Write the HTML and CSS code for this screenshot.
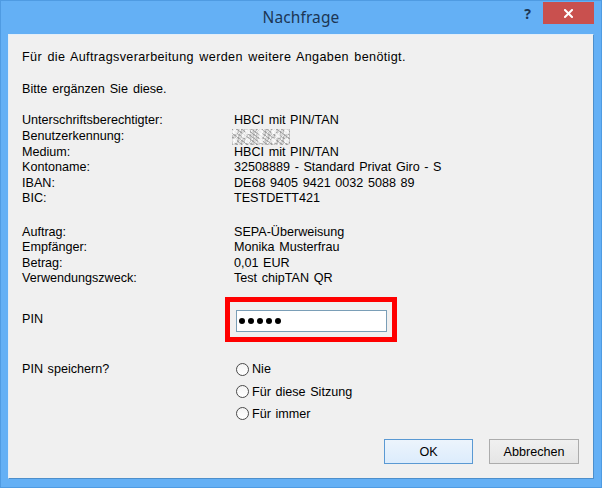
FILE: index.html
```html
<!DOCTYPE html>
<html lang="de">
<head>
<meta charset="utf-8">
<title>Nachfrage</title>
<link rel="stylesheet" href="styles.css">
</head>
<body>
<div class="window">
  <div class="titlebar">
    <div></div>
    <div class="title">Nachfrage</div>
    <div class="controls">
      <span class="help">?</span>
      <span class="close"><svg width="9" height="9" viewBox="0 0 9 9"><path d="M1 1 L8 8 M8 1 L1 8" stroke="#fff" stroke-width="2" stroke-linecap="square"/></svg></span>
    </div>
  </div>
  <div class="client">
    <p class="line first">Für die Auftragsverarbeitung werden weitere Angaben benötigt.</p>
    <p class="line second">Bitte ergänzen Sie diese.</p>
    <div class="info">
      <span>Unterschriftsberechtigter:</span><span>HBCI mit PIN/TAN</span>
      <span>Benutzerkennung:</span><span><span class="blurred"></span></span>
      <span>Medium:</span><span>HBCI mit PIN/TAN</span>
      <span>Kontoname:</span><span>32508889 - Standard Privat Giro - S</span>
      <span>IBAN:</span><span>DE68 9405 9421 0032 5088 89</span>
      <span>BIC:</span><span>TESTDETT421</span>
    </div>
    <div class="info order">
      <span>Auftrag:</span><span>SEPA-Überweisung</span>
      <span>Empfänger:</span><span>Monika Musterfrau</span>
      <span>Betrag:</span><span>0,01 EUR</span>
      <span>Verwendungszweck:</span><span>Test chipTAN QR</span>
    </div>
    <div class="pin-row">
      <span class="pin-label">PIN</span>
      <div class="highlight">
        <div class="pin-input"><span class="dot"></span><span class="dot"></span><span class="dot"></span><span class="dot"></span><span class="dot"></span></div>
      </div>
    </div>
    <div class="save-row">
      <span class="save-label">PIN speichern?</span>
      <div class="radios">
        <label class="radio"><span class="circle"></span>Nie</label>
        <label class="radio"><span class="circle"></span>Für diese Sitzung</label>
        <label class="radio"><span class="circle"></span>Für immer</label>
      </div>
    </div>
    <div class="buttons">
      <button class="btn default">OK</button>
      <button class="btn">Abbrechen</button>
    </div>
  </div>
</div>
</body>
</html>
```

FILE: styles.css
```css
* { box-sizing: border-box; }
html, body { margin: 0; padding: 0; }
body {
  width: 602px;
  height: 488px;
  overflow: hidden;
  font-family: "Liberation Sans", Arial, sans-serif;
  font-size: 12.6px;
  word-spacing: 1.1px;
  color: #000;
}
.window {
  width: 602px;
  height: 488px;
  background: #64b0f5;
  border: 1px solid #4f9be2;
  display: flex;
  flex-direction: column;
}
.titlebar {
  height: 33px;
  display: grid;
  grid-template-columns: 1fr auto 1fr;
  align-items: start;
}
.title {
  font-family: "Noto Sans", "Open Sans", sans-serif;
  font-size: 15.5px;
  word-spacing: 0;
  color: #1c3654;
  line-height: 33px;
  letter-spacing: 0.1px;
}
.controls {
  justify-self: end;
  display: flex;
  align-items: flex-start;
  padding-right: 7px;
}
.help {
  font-family: "Noto Sans", sans-serif;
  font-weight: bold;
  font-size: 14px;
  color: #1c3654;
  line-height: 14px;
  margin-top: 6px;
  margin-right: 12px;
}
.close {
  width: 51px;
  height: 22px;
  margin-top: 1px;
  background: #c9504e;
  display: flex;
  align-items: center;
  justify-content: center;
}
.close svg { display: block; }
.client {
  margin: 0 7px;
  height: 445px;
  background: #f0f0f0;
  border-top: 1px solid #e4eef8;
  border-left: 1px solid #e4eef8;
  border-right: 1px solid #4d8fcb;
  border-bottom: 1px solid #4d8fcb;
  display: flex;
  flex-direction: column;
  padding: 0 0 0 13px;
}
.line {
  margin: 0;
  line-height: 16px;
}
.first { margin-top: 14px; letter-spacing: 0.35px; word-spacing: 1.6px; }
.second { margin-top: 16px; word-spacing: 1.5px; }
.info {
  display: grid;
  grid-template-columns: 212px auto;
  line-height: 15.6px;
  margin-top: 16px;
}
.info.order { margin-top: 17.6px; }
.blurred {
  display: inline-block;
  width: 58px;
  height: 16px;
  vertical-align: top;
  margin-left: -2px;
  background-color: #d9d9d9;
  background-image:
    radial-gradient(circle at 20% 30%, rgba(255,255,255,0.8) 0 2px, transparent 3px),
    radial-gradient(circle at 70% 60%, rgba(255,255,255,0.7) 0 2px, transparent 3px),
    repeating-linear-gradient(37deg, rgba(110,110,110,0.45) 0 1px, transparent 1px 3px),
    repeating-linear-gradient(-61deg, rgba(255,255,255,0.7) 0 1px, transparent 1px 5px),
    repeating-linear-gradient(90deg, rgba(150,150,150,0.3) 0 1px, transparent 1px 3px);
  background-size: 13px 9px, 17px 11px, auto, auto, auto;
}
.pin-row {
  display: flex;
  align-items: center;
  margin-top: 10px;
}
.pin-label {
  width: 203px;
}
.highlight {
  width: 172px;
  height: 45px;
  border: 5px solid #ff0000;
  padding: 8px 5px 0 6px;
}
.pin-input {
  width: 151px;
  height: 22px;
  background: #fff;
  border: 1px solid #7a9eb7;
  display: flex;
  align-items: center;
  gap: 3px;
  padding-left: 2px;
}
.dot {
  width: 6px;
  height: 6px;
  border-radius: 50%;
  background: #000;
}
.save-row {
  display: flex;
  align-items: flex-start;
  margin-top: 16px;
}
.save-label {
  width: 214px;
  line-height: 22px;
}
.radios {
  display: flex;
  flex-direction: column;
}
.radio {
  display: flex;
  align-items: center;
  height: 22.4px;
}
.circle {
  width: 13px;
  height: 13px;
  border: 1px solid #4a4a4a;
  border-radius: 50%;
  background: linear-gradient(#f4f4f4, #ffffff);
  margin-right: 3px;
}
.buttons {
  margin-top: auto;
  display: flex;
  justify-content: flex-end;
  gap: 16px;
  padding: 0 14px 14px 0;
}
.btn {
  font-family: "Liberation Sans", Arial, sans-serif;
  font-size: 12.6px;
  color: #000;
  height: 25px;
  width: 89px;
  border: 1px solid #acacac;
  background: linear-gradient(#f0f0f0, #e5e5e5);
  padding: 0;
  margin: 0;
}
.btn.default {
  border-color: #5a99d3;
  background: linear-gradient(#ecf4fc, #dcecfc);
}
.btn + .btn { width: 90px; }
```
